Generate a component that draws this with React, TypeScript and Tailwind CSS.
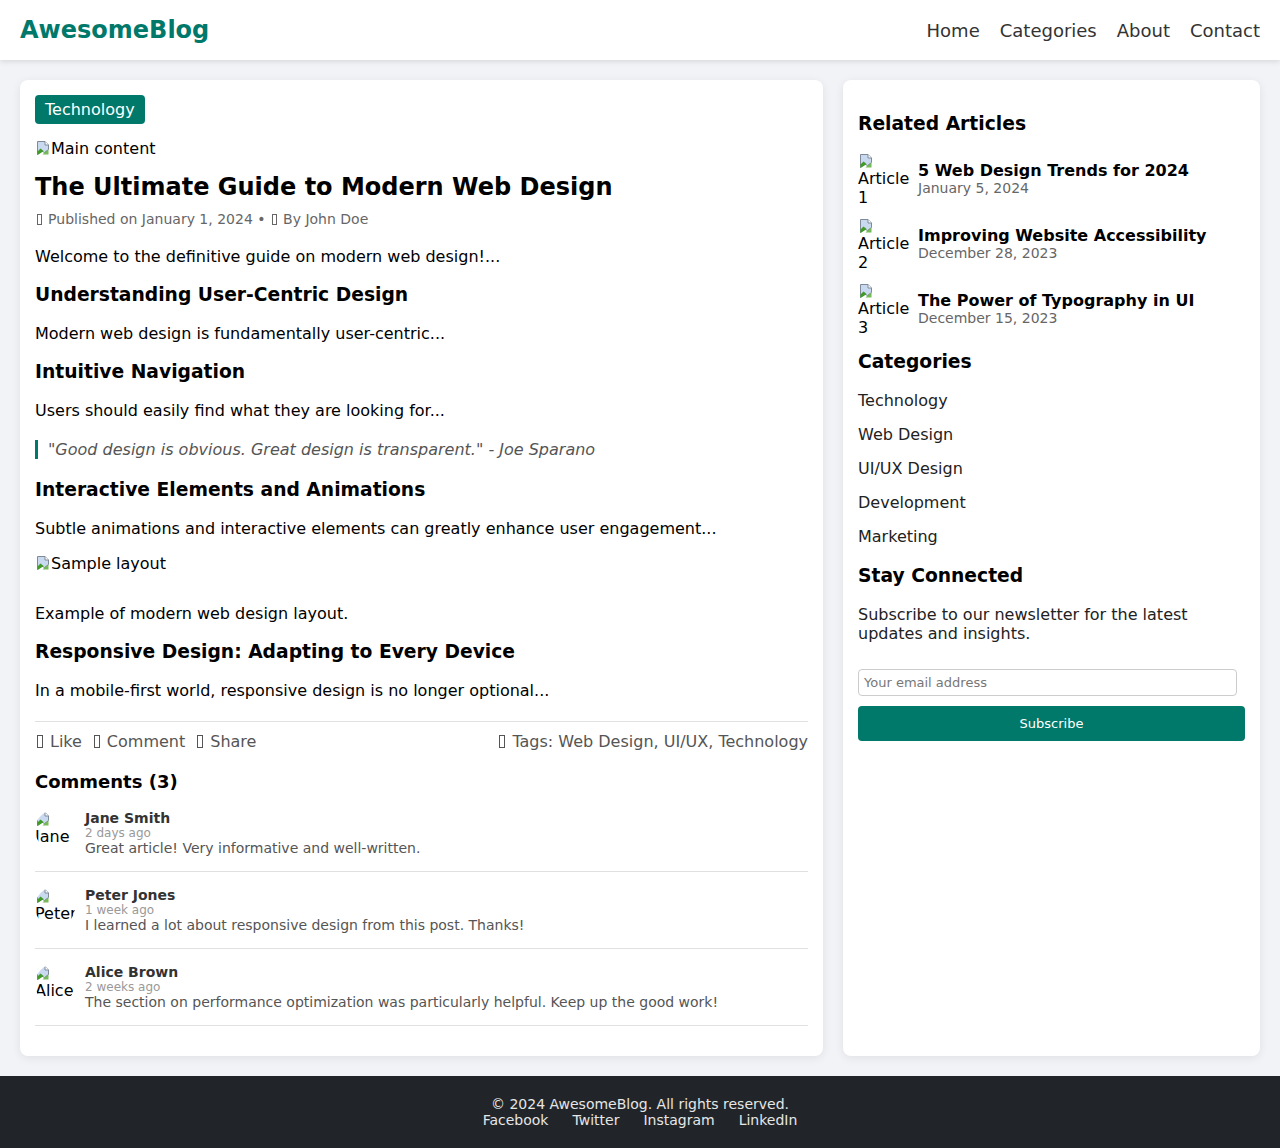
import React from "react"

// chrome-style broken image glyph
const BrokenIcon = ({ className = "" }: { className?: string }) => (
  <svg width="16" height="16" viewBox="0 0 16 16" className={className}>
    <path d="M2.5 1.5h7.5l3.5 3.5v4.5l-4 3-3-1.5-4 3.5z" fill="#c9d9f0" stroke="#7f8a99" strokeWidth="1" />
    <path d="M10 1.5v3.5h3.5" fill="#fff" stroke="#7f8a99" strokeWidth="1" />
    <path d="M2.5 15v-3.5l3-3 3 2.5-2 1.5-4 2.5z" fill="#3f9a26" />
    <path d="M9.5 12.5l4-3v5h-6z" fill="#5fae3c" opacity="0.85" />
  </svg>
)

// missing-glyph box, like the reference shows for its emoji
const Tofu = () => (
  <span className="inline-block w-[0.38em] h-[0.8em] border border-current align-[-0.08em] mx-[0.12em]" />
)

const related = [
  { alt: "Article 1", title: "5 Web Design Trends for 2024", date: "January 5, 2024" },
  { alt: "Article 2", title: "Improving Website Accessibility", date: "December 28, 2023" },
  { alt: "Article 3", title: "The Power of Typography in UI", date: "December 15, 2023" },
]

const comments = [
  { first: "Jane", last: "Smith", time: "2 days ago", text: "Great article! Very informative and well-written." },
  { first: "Peter", last: "Jones", time: "1 week ago", text: "I learned a lot about responsive design from this post. Thanks!" },
  { first: "Alice", last: "Brown", time: "2 weeks ago", text: "The section on performance optimization was particularly helpful. Keep up the good work!" },
]

const categories = ["Technology", "Web Design", "UI/UX Design", "Development", "Marketing"]

export default function App() {
  return (
    <div className="min-h-screen bg-[#f2f3f7] font-['DejaVu_Sans',sans-serif] leading-[normal] text-black">
      {/* header */}
      <header className="h-[60px] bg-white shadow-[0_2px_5px_rgba(0,0,0,0.1)] flex items-center justify-between px-5">
        <div className="text-[24px] font-bold text-[#00796b]">AwesomeBlog</div>
        <nav className="flex gap-5 text-[18px] text-[#333]">
          <a>Home</a>
          <a>Categories</a>
          <a>About</a>
          <a>Contact</a>
        </nav>
      </header>

      <main className="flex gap-5 p-5">
        {/* article */}
        <article className="flex-1 bg-white rounded-lg shadow-[0_2px_10px_rgba(0,0,0,0.08)] p-[15px]">
          <span className="inline-block bg-[#00796b] text-white px-[10px] py-[5px] rounded">Technology</span>
          <div className="mt-[15px] flex items-end">
            <BrokenIcon className="mb-[2px]" />
            <span>Main content</span>
          </div>
          <h1 className="mt-[15px] text-[24px] leading-[28px] font-bold">The Ultimate Guide to Modern Web Design</h1>
          <div className="mt-[10px] text-[14px] leading-[16px] text-[#666]">
            <Tofu /> Published on January 1, 2024 • <Tofu /> By John Doe
          </div>

          <p className="mt-5">Welcome to the definitive guide on modern web design!...</p>
          <h2 className="mt-[18px] text-[18.72px] leading-[22px] font-bold">Understanding User-Centric Design</h2>
          <p className="mt-[18px]">Modern web design is fundamentally user-centric...</p>
          <h3 className="mt-[18px] text-[18.72px] leading-[22px] font-bold">Intuitive Navigation</h3>
          <p className="mt-[18px]">Users should easily find what they are looking for...</p>
          <blockquote className="mt-5 border-l-[3px] border-[#00796b] pl-[10px] italic text-[#555]">
            "Good design is obvious. Great design is transparent." - Joe Sparano
          </blockquote>
          <h2 className="mt-5 text-[18.72px] leading-[22px] font-bold">Interactive Elements and Animations</h2>
          <p className="mt-[18px]">Subtle animations and interactive elements can greatly enhance user engagement...</p>
          <div className="mt-4 flex items-end">
            <BrokenIcon className="mb-[2px]" />
            <span>Sample layout</span>
          </div>
          <p className="mt-[31px]">Example of modern web design layout.</p>
          <h2 className="mt-[18px] text-[18.72px] leading-[22px] font-bold">Responsive Design: Adapting to Every Device</h2>
          <p className="mt-[18px]">In a mobile-first world, responsive design is no longer optional...</p>

          <div className="mt-[21px] border-t border-[#e0e0e0] pt-[10px] flex justify-between text-[#555]">
            <div className="flex gap-[10px]">
              <span><Tofu /> Like</span>
              <span><Tofu /> Comment</span>
              <span><Tofu /> Share</span>
            </div>
            <span><Tofu /> Tags: Web Design, UI/UX, Technology</span>
          </div>

          <h3 className="mt-5 text-[18px] leading-[21px] font-bold">Comments (3)</h3>
          <div className="mt-[3px] mb-[15px]">
            {comments.map((c) => (
              <div key={c.first} className="flex py-[15px] border-b border-[#e0e0e0]">
                <div className="w-10 h-10 mr-[10px] shrink-0 rounded-full overflow-hidden leading-[19px]">
                  <BrokenIcon className="block mt-[1px]" />
                  <div>{c.first}</div>
                  <div>{c.last}</div>
                </div>
                <div>
                  <div className="text-[14px] leading-[16px] font-bold text-[#333]">{c.first} {c.last}</div>
                  <div className="text-[12px] leading-[14px] text-[#999]">{c.time}</div>
                  <div className="text-[14px] leading-[16px] text-[#555]">{c.text}</div>
                </div>
              </div>
            ))}
          </div>
        </article>

        {/* sidebar */}
        <aside className="w-[417px] shrink-0 bg-white rounded-lg shadow-[0_2px_10px_rgba(0,0,0,0.08)] px-[15px] pt-[15px]">
          <h3 className="mt-[18px] text-[18.72px] leading-[22px] font-bold">Related Articles</h3>
          <div className="mt-[18px] flex flex-col gap-[15px]">
            {related.map((r) => (
              <div key={r.alt} className="flex items-center h-[50px]">
                <div className="w-[50px] h-[50px] mr-[10px] shrink-0 leading-[19px]">
                  <BrokenIcon className="block" />
                  <div>{r.alt.split(" ")[0]}</div>
                  <div>{r.alt.split(" ")[1]}</div>
                </div>
                <div>
                  <div className="font-bold leading-[19px]">{r.title}</div>
                  <div className="text-[14px] leading-[16px] text-[#666]">{r.date}</div>
                </div>
              </div>
            ))}
          </div>

          <h3 className="mt-[18px] text-[18.72px] leading-[22px] font-bold">Categories</h3>
          <ul className="mt-[18px] flex flex-col gap-[15px] text-[#222] leading-[19px]">
            {categories.map((c) => (
              <li key={c}>{c}</li>
            ))}
          </ul>

          <h3 className="mt-[19px] text-[18.72px] leading-[22px] font-bold">Stay Connected</h3>
          <p className="mt-[18px] leading-[19px] text-[#222]">Subscribe to our newsletter for the latest updates and insights.</p>
          <input
            type="email"
            placeholder="Your email address"
            className="mt-[26px] block w-[379px] h-[27px] px-[5px] text-[13px] border border-[#ccc] rounded placeholder:text-[#777]"
          />
          <button className="mt-[10px] w-full h-[35px] bg-[#00796b] text-white text-[13px] rounded">Subscribe</button>
        </aside>
      </main>

      <footer className="bg-[#212529] text-[#e6e6e6] text-[14px] leading-[16px] text-center py-5">
        <div>© 2024 AwesomeBlog. All rights reserved.</div>
        <div className="flex justify-center gap-6">
          <a>Facebook</a>
          <a>Twitter</a>
          <a>Instagram</a>
          <a>LinkedIn</a>
        </div>
      </footer>
    </div>
  )
}
